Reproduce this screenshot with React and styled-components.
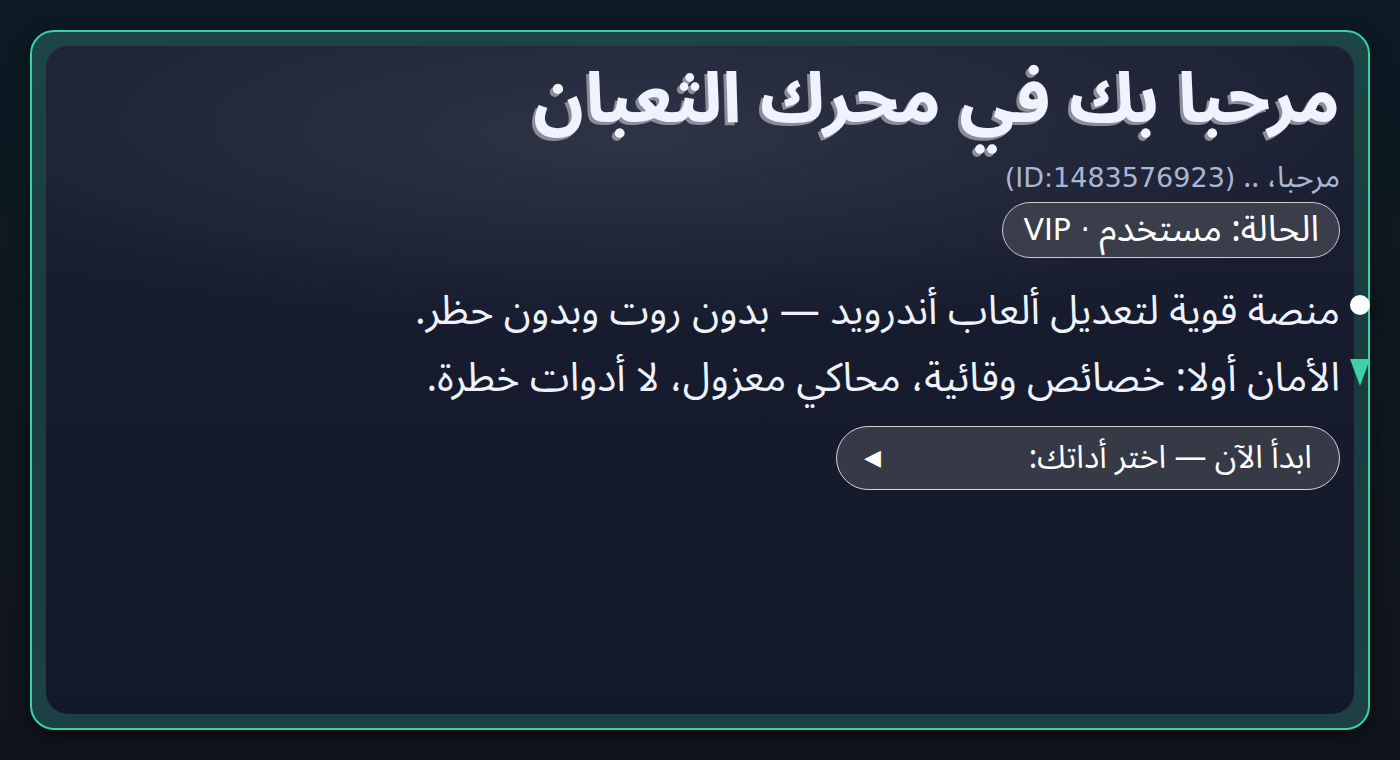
import styled, { createGlobalStyle } from 'styled-components';

const GlobalStyle = createGlobalStyle`
  html, body {
    margin: 0;
    padding: 0;
    height: 100%;
  }
  body {
    background: linear-gradient(180deg, #0c1a23 0%, #0f1820 50%, #12141d 100%);
    font-family: 'Noto Sans Arabic', 'DejaVu Sans', sans-serif;
    color: #eef2fb;
  }
`;

const Page = styled.div`
  box-sizing: border-box;
  width: 1400px;
  height: 760px;
  padding: 30px;
`;

const Frame = styled.div`
  box-sizing: border-box;
  height: 100%;
  border: 2px solid #36d1ab;
  border-radius: 24px;
  padding: 14px;
  background: linear-gradient(180deg, #1d4546 0%, #1a3a3e 50%, #1c4144 100%);
  box-shadow: 0 8px 18px rgba(0, 0, 0, 0.45);
`;

const Panel = styled.section`
  box-sizing: border-box;
  height: 100%;
  border-radius: 22px;
  direction: rtl;
  padding: 12px 14px;
  display: flex;
  flex-direction: column;
  align-items: flex-start;
  background:
    radial-gradient(ellipse 60% 28% at 45% 14%, rgba(70, 76, 96, 0.45), rgba(70, 76, 96, 0) 100%),
    linear-gradient(180deg, #1c2134 0%, #161b2d 45%, #131829 100%);
`;

const Latin = styled.span`
  font-family: 'DejaVu Sans', sans-serif;
  font-size: ${({ $size }) => $size || '0.88em'};
`;

const Title = styled.h1`
  margin: 0;
  font-size: 70px;
  line-height: 84px;
  font-weight: 700;
  color: #eef3ff;
  text-shadow: -3px 3px 0 #8a8e99;
`;

const Greeting = styled.p`
  margin: 16px 0 0;
  font-size: 30px;
  line-height: 40px;
  color: #aab6d2;
`;

const Status = styled.div`
  margin-top: 4px;
  box-sizing: border-box;
  height: 56px;
  padding: 0 20px;
  display: flex;
  align-items: center;
  border: 1px solid #c9ccd3;
  border-radius: 28px;
  background: #3a3d4a;
  font-size: 36px;
  line-height: 1;
  color: #ffffff;
  white-space: pre;
`;

const Features = styled.ul`
  list-style: none;
  margin: 20px 0 0;
  padding: 0;
`;

const Feature = styled.li`
  position: relative;
  font-size: 40px;
  line-height: 67px;
  color: #eef2fb;

  &::before {
    content: '';
    position: absolute;
    top: 50%;
    right: -30px;
    ${({ $marker }) =>
      $marker === 'open'
        ? `
      width: 0;
      height: 0;
      margin-top: -20px;
      border-left: 10px solid transparent;
      border-right: 10px solid transparent;
      border-top: 27px solid #3ccfa9;
    `
        : `
      width: 20px;
      height: 20px;
      margin-top: -17px;
      border-radius: 50%;
      background: #ffffff;
    `}
  }
`;

const StartButton = styled.button`
  margin-top: 14px;
  box-sizing: border-box;
  width: 504px;
  height: 64px;
  padding: 0 27px;
  display: flex;
  align-items: center;
  justify-content: space-between;
  border: 1px solid #d2d5db;
  border-radius: 32px;
  background: #363946;
  font-family: 'Noto Sans Arabic', 'DejaVu Sans', sans-serif;
  font-size: 32px;
  line-height: 1;
  color: #ffffff;
  cursor: pointer;
`;

const Arrow = styled.span`
  font-family: 'DejaVu Sans', sans-serif;
  font-size: 22px;
  color: #ffffff;
`;

export default function App() {
  return (
    <>
      <GlobalStyle />
      <Page>
        <Frame>
          <Panel>
            <Title>مرحبا بك في محرك الثعبان</Title>
            <Greeting>
              مرحبا، .. <Latin $size="27px">(ID:1483576923)</Latin>
            </Greeting>
            <Status>
              الحالة: مستخدم <Latin $size="30px">· VIP</Latin>
            </Status>
            <Features>
              <Feature $marker="dot">منصة قوية لتعديل ألعاب أندرويد — بدون روت وبدون حظر.</Feature>
              <Feature $marker="open">الأمان أولا: خصائص وقائية، محاكي معزول، لا أدوات خطرة.</Feature>
            </Features>
            <StartButton>
              <span>ابدأ الآن — اختر أداتك:</span>
              <Arrow>◀</Arrow>
            </StartButton>
          </Panel>
        </Frame>
      </Page>
    </>
  );
}
